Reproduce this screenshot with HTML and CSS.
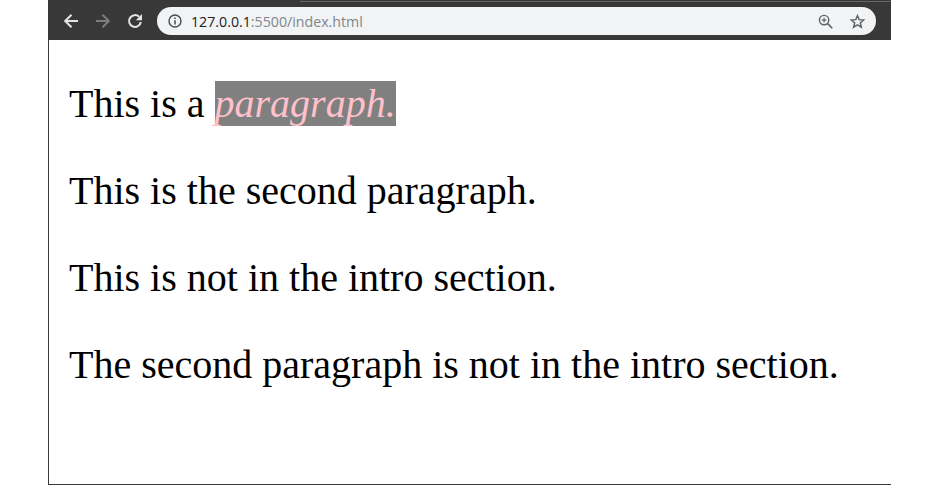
FILE: index.html

```html
<!DOCTYPE html>
<html lang="en">
<head>
  <meta charset="UTF-8">
  <title>index.html</title>
  <link rel="stylesheet" href="styles.css">
</head>
<body>
  <div class="window">
    <div class="toolbar">
      <svg class="nav-icon" viewBox="0 0 18 18"><path d="M16 9H3.500M9.500 2.800 3.200 9l6.300 6.200" fill="none" stroke="#e3e4e5" stroke-width="2"/></svg>
      <svg class="nav-icon" viewBox="0 0 18 18"><path d="M2 9h12.500M8.500 2.800 14.800 9l-6.300 6.200" fill="none" stroke="#7c7d7e" stroke-width="2"/></svg>
      <svg class="nav-icon" viewBox="0 0 18 18"><path d="M14.800 10a5.900 5.900 0 1 1-1.700-5.200" fill="none" stroke="#e3e4e5" stroke-width="2"/><path d="M16 2v6.200H9.800z" fill="#e3e4e5"/></svg>
      <div class="address">
        <svg class="info-icon" viewBox="0 0 14 14"><circle cx="7" cy="7" r="6" fill="none" stroke="#4a4c4f" stroke-width="1.400"/><path d="M7 6.200v4.300M7 3.400v1.500" stroke="#4a4c4f" stroke-width="1.500"/></svg>
        <span class="host">127.0.0.1</span><span class="path">:5500/index.html</span>
        <svg class="zoom-icon" viewBox="0 0 16 16"><circle cx="6.500" cy="6.500" r="5" fill="none" stroke="#5f6368" stroke-width="1.500"/><path d="M10 10l5.200 5.200" stroke="#5f6368" stroke-width="1.800"/><path d="M6.500 4v5M4 6.500h5" stroke="#5f6368" stroke-width="1.200"/></svg>
        <svg class="star-icon" viewBox="0 0 16 16"><path d="M8 1.800l1.800 4.200 4.800.4-3.600 3.100 1.100 4.600L8 11.600l-4.100 2.500L5 9.500 1.400 6.400l4.800-.4z" fill="none" stroke="#5f6368" stroke-width="1.600"/></svg>
      </div>
    </div>
    <div class="content">
      <p>This is a <em class="highlight">paragraph.</em></p>
      <p>This is the second paragraph.</p>
      <p>This is not in the intro section.</p>
      <p>The second paragraph is not in the intro section.</p>
    </div>
  </div>
</body>
</html>
```

FILE: styles.css

```css
* {
  box-sizing: border-box;
}

body {
  margin: 0;
  background: #fff;
}

.window {
  width: 843px;
  height: 485px;
  margin-left: 48px;
  border-left: 1px solid #3a3a3a;
  border-bottom: 1px solid #3a3a3a;
  overflow: hidden;
}

.toolbar {
  position: relative;
  display: flex;
  align-items: center;
  gap: 14px;
  height: 40px;
  padding: 7px 15px 5px 13px;
  background: #383838;
}

/* edge of the tab strip, cropped at the top of the shot */
.toolbar::before {
  content: "";
  position: absolute;
  top: 1px;
  left: 251px;
  right: 0;
  height: 1px;
  background: #666;
}

.nav-icon {
  flex: none;
  width: 18px;
  height: 18px;
}

.address {
  display: flex;
  align-items: center;
  flex: 1;
  height: 28px;
  margin-left: -1px;
  padding: 0 11px;
  border-radius: 14px;
  background: #f1f3f4;
  font-family: "Open Sans", sans-serif;
  font-size: 14.2px;
}

.info-icon {
  width: 14px;
  height: 14px;
  margin-right: 9px;
}

.host {
  color: #202124;
}

.path {
  color: #80868b;
}

.zoom-icon {
  width: 15px;
  height: 15px;
  margin-left: auto;
  margin-right: 17px;
}

.star-icon {
  width: 15px;
  height: 15px;
}

.content {
  padding: 41px 0 0 20px;
  font-family: "Liberation Serif", serif;
  font-size: 40px;
  color: #000;
}

.content p {
  margin: 0 0 41px;
  line-height: 46px;
  white-space: nowrap;
}

.highlight {
  background: gray;
  color: pink;
}
```
